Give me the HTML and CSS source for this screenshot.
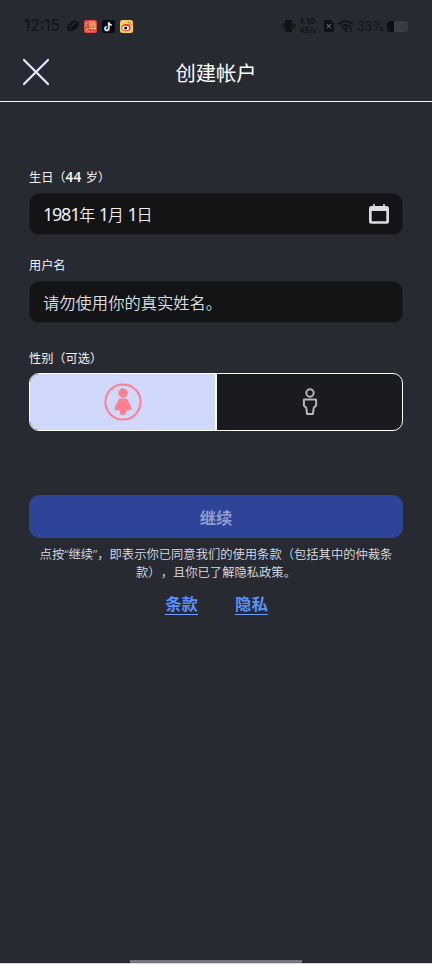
FILE: index.html
```html
<!DOCTYPE html>
<html lang="zh-CN">
<head>
<meta charset="utf-8">
<meta name="viewport" content="width=device-width">
<title>创建帐户</title>
<link rel="stylesheet" href="styles.css">
</head>
<body>
<div class="screen">
  <div class="status">
    <span class="time">12:15</span>
    <svg class="leaf" width="14" height="14" viewBox="0 0 14 14"><ellipse cx="7" cy="7" rx="6.6" ry="4.2" transform="rotate(-38 7 7)" fill="#101114"/><path d="M3.500 9.500Q5.500 5 10.500 3.800" stroke="#292b32" fill="none" stroke-width="1.300"/></svg>
    <svg class="app" width="13" height="13" viewBox="0 0 13 13"><rect width="13" height="13" rx="2.5" fill="#e04a42"/><path d="M1.5 2.5l2 1M1 5l2 1M1.5 11q2-1 2-3M4.5 2h7M5 4h6M5 6h5.5M7.5 2v7M4.5 8.5h7M11 3v7" stroke="#ffd07a" stroke-width=".9" fill="none"/><path d="M3 11.500h7" stroke="#ff5a79" stroke-width="1.5"/></svg>
    <svg class="app" width="13" height="13" viewBox="0 0 13 13"><rect width="13" height="13" rx="2.5" fill="#080916"/><g fill="none" stroke-width="1.5"><path d="M6.5 2.2v6.4a1.9 1.9 0 1 1-2-1.9M6.5 2.5q.5 2.3 3 2.4" stroke="#35e5ea"/><path d="M7.2 2.5v6.3a1.9 1.9 0 0 1-3.4 1.2M7.2 2.8q.5 2.3 2.9 2.6" stroke="#f83a62"/><path d="M6.9 2.3v6.3a1.8 1.8 0 1 1-2-1.8M6.9 2.6q.5 2.2 2.9 2.4" stroke="#fff" stroke-width="1.1"/></g></svg>
    <svg class="app" width="13" height="13" viewBox="0 0 13 13"><rect width="13" height="13" rx="2.5" fill="#f6cf61"/><ellipse cx="6" cy="7.7" rx="4.7" ry="3.6" fill="#d93a2d"/><ellipse cx="5.7" cy="8" rx="3.4" ry="2.3" fill="#fff"/><circle cx="5.7" cy="8" r="1.6" fill="#1b1213"/><path d="M7.5 2.2q4-.6 3.7 3.5M8 4q1.7-.2 1.6 1.4" stroke="#e4572c" fill="none" stroke-width=".9"/></svg>
    <span class="fill"></span>
    <svg class="vibe" width="15" height="14" viewBox="0 0 15 14"><rect x="4" y="1" width="7.4" height="12" rx="1.8" fill="#111215"/><path d="M2.700 4v6M12.700 4v6M.9 5.700v2.600M14.400 5.700v2.600" stroke="#15161a" stroke-width="1.300"/></svg>
    <span class="speed"><span class="rate">1.10</span><span>KB/s</span></span>
    <svg class="sim" width="10" height="12" viewBox="0 0 10 12"><path d="M1.5 0h5L9.700 3.200v7.300Q9.700 12 8.200 12H1.500Q0 12 0 10.500v-9Q0 0 1.500 0z" fill="#101114"/><path d="M2.800 4.200l4 4M6.800 4.200l-4 4" stroke="#60626a" stroke-width="1.100"/></svg>
    <svg class="wifi" width="15" height="13" viewBox="0 0 15 13"><g fill="none" stroke="#111215" stroke-width="1.600"><path d="M.6 4.200q6.900-6 13.800 0M2.800 6.800q4.700-4 9.400 0M5 9.200q2.500-2.100 5 0"/></g><path d="M5.700 10.100h3.600L7.500 12.400z" fill="#111215"/><path d="M11.600 8.200h2M11.600 11h2" stroke="#111215" stroke-width="1.400"/></svg>
    <span class="percent">33%</span>
    <span class="battery"><span></span></span>
  </div>
  <header class="header">
    <svg class="close" width="28" height="28" viewBox="0 0 28 28"><path d="M2 2l24 24M26 2L2 26" stroke="#dfe5ff" stroke-width="2.300" stroke-linecap="round"/></svg>
    <h1>创建帐户</h1>
  </header>
  <main class="form">
    <div class="label">生日（<b>44</b> 岁）</div>
    <div class="field date"><span><i>1981</i>年 <i>1</i>月 <i>1</i>日</span>
      <svg width="20" height="20" viewBox="0 0 20 20"><path fill="#dcdce2" fill-rule="evenodd" d="M4.200 0h1.600v2h8.400V0h1.600v2h1.700Q20 2 20 4.500v12.700q0 2.500-2.500 2.500h-15Q0 19.700 0 17.200V4.500Q0 2 2.500 2h1.700zM2.700 7v10.300h14.600V7z"/></svg>
    </div>
    <div class="label user-label">用户名</div>
    <div class="field">请勿使用你的真实姓名。</div>
    <div class="label gender-label">性别（可选）</div>
    <div class="gender">
      <div class="choice selected"><svg width="38" height="38" viewBox="0 0 38 38"><circle cx="19" cy="19" r="17.600" fill="none" stroke="#ff7f8f" stroke-width="2"/><g fill="#ff7f8f"><circle cx="19" cy="10" r="4.700"/><path d="M15.800 15.500q-.7 0-1 .700L10.300 25.500q-.5 1.200.8 1.400l4.400.700.800 3.300q.2.900 1 .900h3.400q.8 0 1-.900l.8-3.300 4.400-.700q1.300-.2.800-1.400L23.200 16.200q-.3-.7-1-.7z"/></g></svg></div>
      <div class="choice"><svg width="16" height="28" viewBox="0 0 16 28"><g fill="none" stroke="#b5b5ba" stroke-width="2"><circle cx="8" cy="5" r="3.700"/><path d="M2.300 11.500h11.400q.4 0 .4.400v5.600l-2.300 2.200-.9 6.300H5.100l-.9-6.300-2.300-2.200v-5.600q0-.4.400-.4z" stroke-linejoin="round"/></g></svg></div>
    </div>
    <div class="submit">继续</div>
    <p class="terms">点按<span class="quote">“</span>继续<span class="quote">”</span>，即表示你已同意我们的使用条款（包括其中的仲裁条<br>款），且你已了解隐私政策。</p>
    <nav class="links"><a>条款</a><a>隐私</a></nav>
  </main>
  <div class="home"></div>
</div>
</body>
</html>
```

FILE: styles.css
```css
* { box-sizing: border-box; }
body { margin: 0; background: #272a31; color: #f4f4f6; font-family: "Noto Sans CJK SC", sans-serif; text-spacing-trim: space-all; }
.screen { width: 432px; height: 964px; display: flex; flex-direction: column; overflow: hidden; border-bottom: 1px solid #d6d5da; }
.status { height: 44px; flex: none; padding: 8px 24px 0; display: flex; align-items: center; color: #111215; font-family: Inter, sans-serif; }
.time { width: 37px; font-size: 15.500px; line-height: 20px; white-space: nowrap; }
.leaf { margin-left: 5px; margin-right: 4px; }
.app { margin-right: 5px; }
.fill { flex: 1; }
.vibe { margin-right: 4px; }
.speed { width: 22px; display: grid; grid-template-rows: 9px 9px; font-size: 7.200px; line-height: 9px; font-weight: 600; white-space: nowrap; }
.rate { font-size: 8px; letter-spacing: .35px; }
.sim { margin-left: 2px; }
.wifi { margin-left: 4px; }
.percent { width: 27px; margin-left: 4px; font-size: 12.500px; line-height: 20px; margin-top: 2px; letter-spacing: -.1px; white-space: nowrap; }
.battery { width: 21px; height: 11px; border-radius: 3.500px; background: #3a3c42; overflow: hidden; margin-left: 3px; }
.battery span { display: block; width: 7px; height: 11px; background: #0f1013; }
.status > svg, .speed, .percent, .battery { flex: none; }
.header { height: 58px; flex: none; position: relative; display: flex; align-items: center; justify-content: center; border-bottom: 1px solid #f2f8f8; }
.close { position: absolute; left: 22px; top: 14px; }
h1 { margin: 0 0 2px; font-size: 20.300px; line-height: 30px; font-weight: 400; color: #fff; }
.form { flex: 1; padding: 66px 29px 0; }
.label { font-size: 12.200px; line-height: 18px; height: 18px; white-space: nowrap; word-spacing: 1.500px; }
.label b { font-family: "Noto Sans", sans-serif; font-size: 13.500px; font-weight: 600; letter-spacing: .3px; }
.field { margin-top: 7px; height: 42px; border-radius: 10px; border: 1px solid #1d1e21; background: #131416; padding: 0 13px; display: flex; align-items: center; font-size: 16.300px; font-weight: 350; color: #dfdfe3; white-space: nowrap; }
.date { justify-content: space-between; padding: 0 13px; font-size: 16px; color: #efeff1; }
.date i { font-family: "Noto Sans", sans-serif; font-style: normal; font-size: 18px; font-weight: 400; letter-spacing: -1.250px; }
.user-label { margin-top: 21px; }
.user-label + .field { margin-top: 7px; }
.gender-label { margin-top: 26px; }
.gender { margin-top: 6px; height: 58px; border: 1px solid #fff; border-radius: 10px; display: flex; overflow: hidden; background: #1a1b1f; }
.choice { flex: 1; display: flex; align-items: center; justify-content: center; }
.selected { background: #d0d8fc; border-right: 2px solid #fff; }
.submit { margin-top: 64px; height: 43px; border-radius: 11px; background: #2e4498; color: #929ccd; font-size: 16.300px; font-weight: 700; display: flex; align-items: center; justify-content: center; }
.terms { margin: 7px -10px 0; text-align: center; font-size: 12.300px; line-height: 18px; color: #dedfe2; font-weight: 350; white-space: nowrap; }
.quote { font-family: "Noto Sans", sans-serif; font-size: 13.500px; line-height: 1; }
.links { display: flex; justify-content: center; gap: 37px; margin: 12px 0 0 1px; }
.links a { color: #5b91fa; font-size: 16.400px; line-height: 20px; font-weight: 700; border-bottom: 1px solid #69a0ff; height: 22px; }
.home { width: 172px; height: 3px; align-self: center; background: #77757b; flex: none; }
```
